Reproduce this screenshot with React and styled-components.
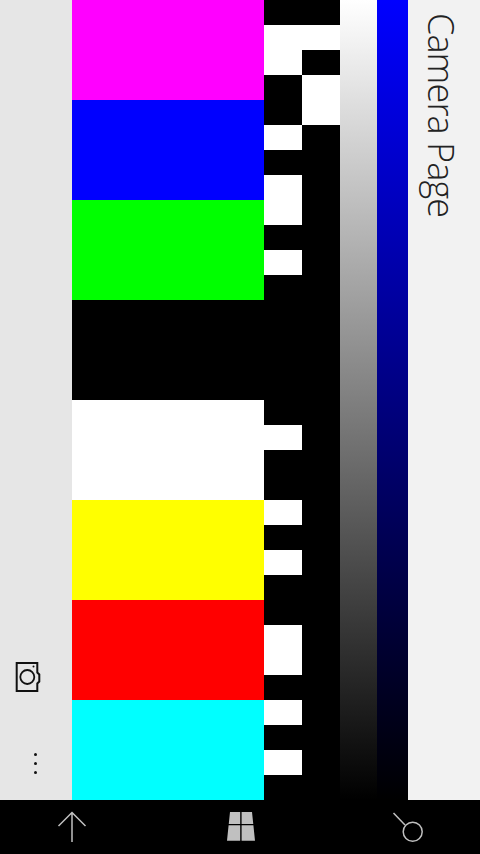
import React from 'react';
import styled, { createGlobalStyle } from 'styled-components';

const GlobalStyle = createGlobalStyle`
	html, body {
		margin: 0;
		padding: 0;
		background: #000;
	}
`;

const BAR_COLORS = ['#ff00ff', '#0000ff', '#00ff00', '#000000', '#ffffff', '#ffff00', '#ff0000', '#00ffff'];

// white runs of the test pattern, [start, end] in rows of 25px
const LEFT_RUNS = [[1, 3], [5, 6], [7, 9], [10, 11], [17, 18], [20, 21], [22, 23], [25, 27], [28, 29], [30, 31]];
const RIGHT_RUNS = [[1, 2], [3, 5]];

const Screen = styled.div`
	display: flex;
	flex-direction: column;
	width: 480px;
	height: 854px;
	overflow: hidden;
`;

const Page = styled.div`
	display: flex;
	height: 800px;
	background: #000;
`;

const CommandBar = styled.div`
	display: flex;
	flex-direction: column;
	align-items: flex-start;
	flex: 0 0 72px;
	padding: 0 0 26px 15px;
	box-sizing: border-box;
	justify-content: flex-end;
	background: #e6e6e6;
`;

const CameraButton = styled.svg`
	display: block;
	width: 27px;
	height: 32px;
	margin-bottom: 59px;
`;

const MoreDots = styled.div`
	display: flex;
	flex-direction: column;
	gap: 6px;
	margin-left: 18.5px;
`;

const Dot = styled.span`
	width: 3px;
	height: 3px;
	border-radius: 50%;
	background: #111;
`;

const ColorBars = styled.div`
	display: flex;
	flex-direction: column;
	flex: 0 0 192px;
`;

const ColorBar = styled.div`
	height: 100px;
	background: ${(p) => p.$color};
`;

const Pattern = styled.div`
	display: flex;
	flex: 0 0 76px;
`;

const PatternColumn = styled.div`
	display: grid;
	grid-template-rows: repeat(32, 25px);
	flex: 1;
	background: #000;
`;

const WhiteRun = styled.div`
	grid-row: ${(p) => p.$start + 1} / ${(p) => p.$end + 1};
	background: #fff;
`;

const Ramp = styled.div`
	flex: 0 0 ${(p) => p.$width}px;
	background: linear-gradient(to bottom, ${(p) => p.$from}, #000);
`;

const TitlePanel = styled.div`
	flex: 1;
	display: flex;
	justify-content: flex-start;
	padding: 13px 0 0 10px;
	background: #f2f2f2;
`;

const Title = styled.div`
	writing-mode: vertical-rl;
	font-family: 'Open Sans', sans-serif;
	font-weight: 300;
	font-size: 36px;
	letter-spacing: -0.9px;
	line-height: 46px;
	color: #222;
	white-space: nowrap;
`;

const NavBar = styled.div`
	display: flex;
	align-items: flex-start;
	justify-content: space-between;
	height: 54px;
	padding: 10px 48px 0 52px;
	box-sizing: border-box;
	background: #000;
`;

const NavIcon = styled.svg`
	display: block;
	width: 40px;
	height: 36px;
	fill: none;
	stroke: #c0c0c0;
	stroke-width: 1.5;
`;

const App = () => {
	return (
		<>
			<GlobalStyle />
			<Screen>
				<Page>
					<CommandBar>
						<CameraButton viewBox="0 0 27 32" fill="none" stroke="#111">
							<path d="M22.3 1H1.7V29H22.3V21.5L24.3 19.5V12.5L22.3 10.5Z" strokeWidth="2" />
							<circle cx="12.3" cy="15" r="7" strokeWidth="1.8" />
							<circle cx="18.5" cy="4.5" r="1" fill="#111" stroke="none" />
						</CameraButton>
						<MoreDots>
							<Dot />
							<Dot />
							<Dot />
						</MoreDots>
					</CommandBar>
					<ColorBars>
						{BAR_COLORS.map((color) => (
							<ColorBar key={color} $color={color} />
						))}
					</ColorBars>
					<Pattern>
						<PatternColumn>
							{LEFT_RUNS.map(([start, end]) => (
								<WhiteRun key={start} $start={start} $end={end} />
							))}
						</PatternColumn>
						<PatternColumn>
							{RIGHT_RUNS.map(([start, end]) => (
								<WhiteRun key={start} $start={start} $end={end} />
							))}
						</PatternColumn>
					</Pattern>
					<Ramp $width={37} $from="#ffffff" />
					<Ramp $width={31} $from="#0000ff" />
					<TitlePanel>
						<Title>Camera Page</Title>
					</TitlePanel>
				</Page>
				<NavBar>
					<NavIcon viewBox="0 0 40 36">
						<path d="M20 2.5V32M6.5 16L20 2.5L33.5 16" />
					</NavIcon>
					<NavIcon viewBox="0 0 40 36">
						<path
							d="M8 2H18.2V14H6.75ZM19.6 2H30L31.25 14H19.6ZM6.6 15.3H18.2V30.7H5ZM19.6 15.3H31.4L33 30.7H19.6Z"
							fill="#c0c0c0"
							stroke="none"
						/>
					</NavIcon>
					<NavIcon viewBox="0 0 40 36">
						<path d="M1.5 3L13 15" />
						<circle cx="20.7" cy="21.7" r="9.5" />
					</NavIcon>
				</NavBar>
			</Screen>
		</>
	);
};

export default App;
